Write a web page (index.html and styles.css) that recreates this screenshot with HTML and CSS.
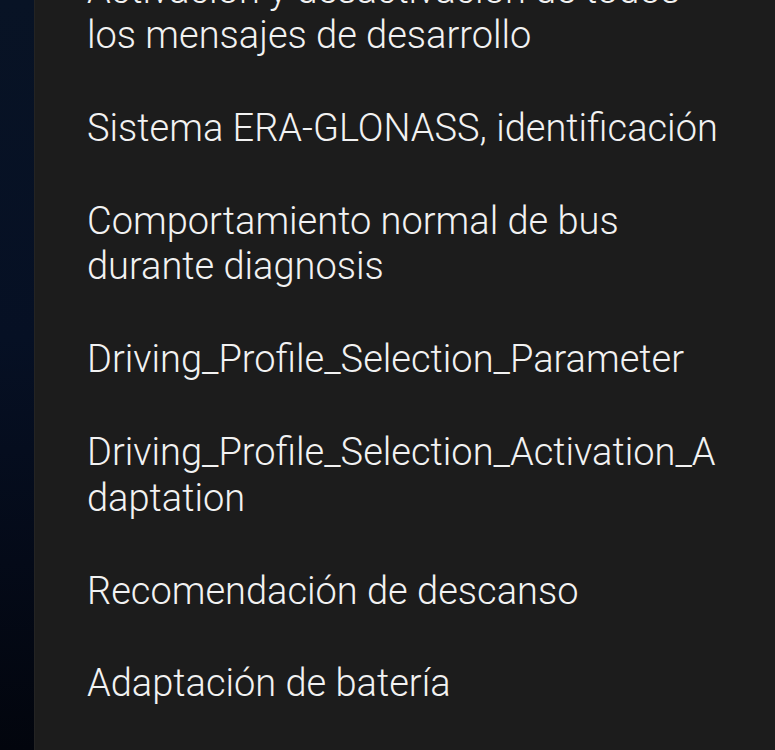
FILE: index.html
```html
<!DOCTYPE html>
<html lang="es">
<head>
<meta charset="utf-8">
<link rel="stylesheet" href="styles.css">
</head>
<body>
<div class="screen">
  <div class="backdrop"></div>
  <div class="panel">
    <ul class="list">
      <li class="item">Activación y desactivación de todos los mensajes de desarrollo</li>
      <li class="item">Sistema ERA-GLONASS, identificación</li>
      <li class="item">Comportamiento normal de bus durante diagnosis</li>
      <li class="item">Driving_Profile_Selection_Parameter</li>
      <li class="item">Driving_Profile_Selection_Activation_Adaptation</li>
      <li class="item">Recomendación de descanso</li>
      <li class="item">Adaptación de batería</li>
    </ul>
  </div>
</div>
</body>
</html>
```
FILE: styles.css
```css
html, body {
  margin: 0;
  padding: 0;
  width: 775px;
  height: 750px;
  overflow: hidden;
  background: #1c1c1c;
}
.screen {
  display: flex;
  width: 775px;
  height: 750px;
  overflow: hidden;
}
.backdrop {
  flex: 0 0 34px;
  background: linear-gradient(180deg, #081325 0%, #061024 45%, #040a18 75%, #02050d 100%);
}
.panel {
  flex: 1;
  background: #1c1c1c;
  border-left: 1px solid #232323;
  overflow: hidden;
}
.list {
  list-style: none;
  margin: -56px 0 0 0;
  padding: 0 44px 0 52px;
  font-family: Roboto, "Noto Sans", sans-serif;
  font-weight: 300;
  font-size: 38px;
  line-height: 45.5px;
  color: #f2f2f2;
}
.item {
  padding: 23.7px 0;
  overflow-wrap: anywhere;
}
```
